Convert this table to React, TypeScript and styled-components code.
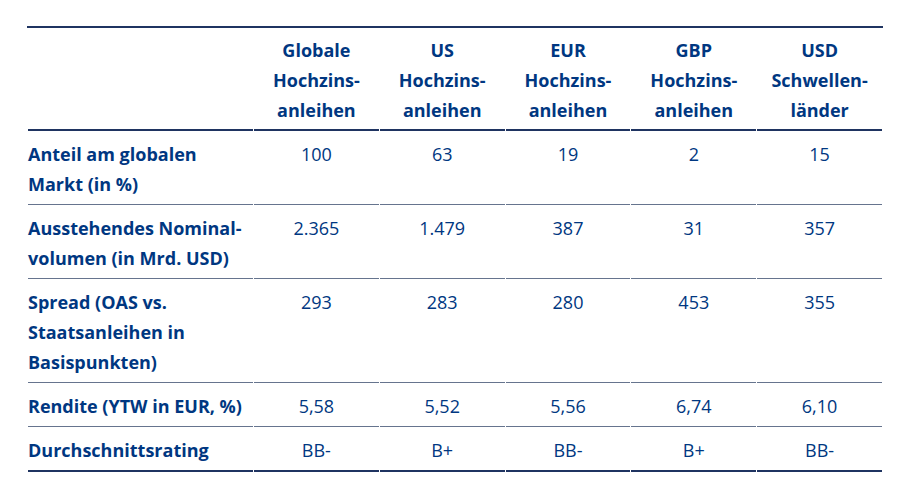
import React from "react";
import styled, { createGlobalStyle } from "styled-components";

const Global = createGlobalStyle`
  html, body { margin: 0; padding: 0; background: #ffffff; }
  body { font-family: "Open Sans", "Noto Sans", sans-serif; }
`;

const Page = styled.div`
  padding: 26px 30px 0 28px;
  width: 913px;
  box-sizing: border-box;
`;

const Table = styled.table`
  width: 856px;
  margin-left: -1px;
  border-collapse: separate;
  border-spacing: 1px 0;
  table-layout: fixed;
  color: #003781;
  font-size: 18px;
  line-height: 30px;
  border-top: 2.5px solid #1f3461;
`;

const HeadCell = styled.th<{ $first?: boolean }>`
  font-weight: 700;
  text-align: center;
  vertical-align: top;
  padding: 7px 0 4px;
  border-bottom: 2.5px solid #1f3461;
  width: ${(p) => (p.$first ? "225px" : "auto")};
`;

const LabelCell = styled.td<{ $last?: boolean }>`
  font-weight: 700;
  text-align: left;
  vertical-align: top;
  padding: 8px 0 5px;
  border-bottom: ${(p) => (p.$last ? "2.5px solid #1f3461" : "1.5px solid #66748e")};
`;

const ValueCell = styled.td<{ $last?: boolean }>`
  font-weight: 400;
  text-align: center;
  vertical-align: top;
  padding: 8px 0 5px;
  border-bottom: ${(p) => (p.$last ? "2.5px solid #1f3461" : "1.5px solid #66748e")};
`;

const headers: string[][] = [
  ["Globale", "Hochzins-", "anleihen"],
  ["US", "Hochzins-", "anleihen"],
  ["EUR", "Hochzins-", "anleihen"],
  ["GBP", "Hochzins-", "anleihen"],
  ["USD", "Schwellen-", "länder"],
];

const rows: { label: string[]; values: string[] }[] = [
  { label: ["Anteil am globalen", "Markt (in %)"], values: ["100", "63", "19", "2", "15"] },
  { label: ["Ausstehendes Nominal-", "volumen (in Mrd. USD)"], values: ["2.365", "1.479", "387", "31", "357"] },
  { label: ["Spread (OAS vs.", "Staatsanleihen in", "Basispunkten)"], values: ["293", "283", "280", "453", "355"] },
  { label: ["Rendite (YTW in EUR, %)"], values: ["5,58", "5,52", "5,56", "6,74", "6,10"] },
  { label: ["Durchschnittsrating"], values: ["BB-", "B+", "BB-", "B+", "BB-"] },
];

const Lines = ({ parts }: { parts: string[] }) => (
  <>
    {parts.map((p, i) => (
      <React.Fragment key={i}>
        {i > 0 && <br />}
        {p}
      </React.Fragment>
    ))}
  </>
);

export default function App() {
  return (
    <>
      <Global />
      <Page>
        <Table>
          <thead>
            <tr>
              <HeadCell $first />
              {headers.map((h, i) => (
                <HeadCell key={i}>
                  <Lines parts={h} />
                </HeadCell>
              ))}
            </tr>
          </thead>
          <tbody>
            {rows.map((r, i) => {
              const last = i === rows.length - 1;
              return (
                <tr key={i}>
                  <LabelCell $last={last}>
                    <Lines parts={r.label} />
                  </LabelCell>
                  {r.values.map((v, j) => (
                    <ValueCell key={j} $last={last}>
                      {v}
                    </ValueCell>
                  ))}
                </tr>
              );
            })}
          </tbody>
        </Table>
      </Page>
    </>
  );
}
